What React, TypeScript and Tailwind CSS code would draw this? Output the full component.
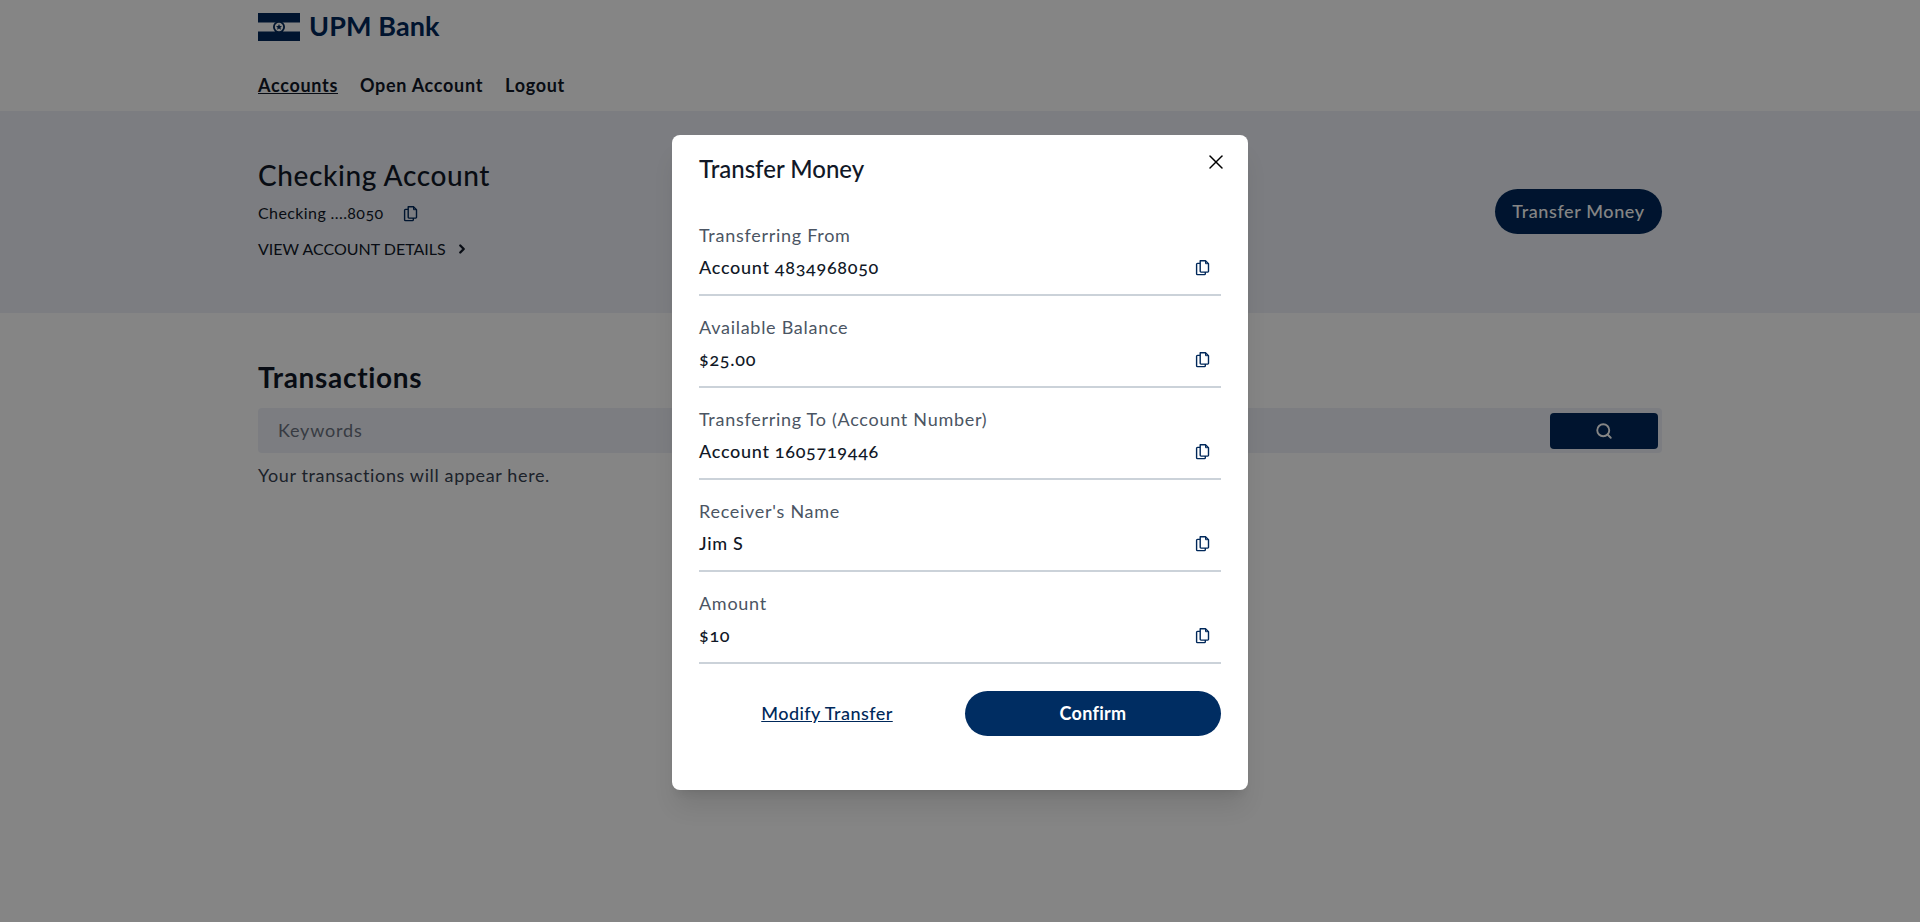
import React from "react";
import { X, ChevronRight, Search } from "lucide-react";

const F = "font-['Lato','Open_Sans',sans-serif]";

function Copy({ c = "#00285a" }: { c?: string }) {
  return (
    <svg width="15" height="17" viewBox="0 0 15 17" fill="none" stroke={c} strokeWidth="1.4" strokeLinejoin="round">
      <path d="M5.2 1.7h5.3l3 3v7.6a.8.8 0 0 1-.8.8H6a.8.8 0 0 1-.8-.8z" />
      <path d="M10.5 1.7v3h3" strokeWidth="1" />
      <path d="M5.2 4.4H2.5a.9.9 0 0 0-.9.9v9.4a.9.9 0 0 0 .9.9h6.9a.9.9 0 0 0 .9-.9v-1.6" />
    </svg>
  );
}

function Logo() {
  return (
    <svg width="42" height="28" viewBox="0 0 42 28">
      <rect width="42" height="28" fill="#fff" />
      <rect width="42" height="9.5" fill="#00285a" />
      <rect y="18.5" width="42" height="9.5" fill="#00285a" />
      <circle cx="21" cy="14" r="6" fill="#00285a" />
      <circle cx="21" cy="14" r="4.2" fill="#fff" />
      <polygon points="21,11 21.9,13 24,13.2 22.4,14.6 22.9,16.8 21,15.6 19.1,16.8 19.6,14.6 18,13.2 20.1,13" fill="#00285a" />
    </svg>
  );
}

function Field({ label, value }: { label: string; value: string }) {
  return (
    <div className="h-[92px] flex flex-col">
      <div className="text-[18px] leading-[24px] text-[#4b5563] mt-[19px] tracking-[0.72px]">{label}</div>
      <div className="flex items-center justify-between border-b-2 border-[#cbd2d9] h-[49px] pr-[11px] pb-[7px]">
        <span className="text-[18px] text-[#111827] font-medium tracking-[0.7px] oldstyle-nums">{value}</span>
        <Copy />
      </div>
    </div>
  );
}

export default function App() {
  return (
    <div className={`${F} relative h-[922px] overflow-hidden bg-white text-[#111827]`}>
      <header className="h-[111px] pl-[258px]">
        <div className="flex items-center gap-[9px] h-[53px]">
          <Logo />
          <span className="text-[27px] font-bold text-[#00285a] tracking-[0.1px]">UPM Bank</span>
        </div>
        <nav className="flex gap-[22px] mt-[19px] text-[18px] font-bold tracking-[0.7px]">
          <span className="underline">Accounts</span>
          <span>Open Account</span>
          <span>Logout</span>
        </nav>
      </header>
      <section className="h-[202px] bg-[#edf0f7] px-[258px] flex items-center justify-between">
        <div className="-mt-[6px]">
          <h1 className="text-[28px] leading-[36px] font-medium tracking-[0.6px]">Checking Account</h1>
          <div className="flex items-center gap-[20px] mt-[8px] text-[16px] tracking-[0.4px] oldstyle-nums">
            <span>Checking ....8050</span>
            <Copy />
          </div>
          <div className="flex items-center gap-[9px] mt-[12px] text-[16px]">
            <span>VIEW ACCOUNT DETAILS</span>
            <ChevronRight size={14} strokeWidth={4} />
          </div>
        </div>
        <button className="w-[167px] h-[45px] -mt-[1px] rounded-full bg-[#00285a] text-white text-[18px] font-medium tracking-[0.6px]">
          Transfer Money
        </button>
      </section>
      <main className="px-[258px] pt-[46px]">
        <h2 className="text-[28px] leading-[36px] font-bold tracking-[0.7px]">Transactions</h2>
        <div className="mt-[13px] h-[45px] bg-[#edf0f7] rounded flex items-center justify-between pl-[20px] pr-[4px]">
          <span className="text-[18px] text-[#6b7280] tracking-[0.8px]">Keywords</span>
          <button className="w-[108px] h-[36px] rounded bg-[#00285a] flex items-center justify-center">
            <Search size={18} color="#fff" strokeWidth={2.5} />
          </button>
        </div>
        <p className="mt-[9px] text-[18px] text-[#374151] tracking-[0.63px]">Your transactions will appear here.</p>
      </main>
      <div className="absolute inset-0 bg-black/[.48]" />
      <div className="absolute left-[672px] top-[135px] w-[576px] h-[655px] bg-white rounded-lg shadow-xl px-[27px]">
        <X size={24} strokeWidth={1.5} className="absolute right-[20px] top-[15px] text-black" />
        <h3 className="text-[24px] font-medium leading-[32px] mt-[18px] mb-[19px]">Transfer Money</h3>
        <Field label="Transferring From" value="Account 4834968050" />
        <Field label="Available Balance" value="$25.00" />
        <Field label="Transferring To (Account Number)" value="Account 1605719446" />
        <Field label="Receiver's Name" value="Jim S" />
        <Field label="Amount" value="$10" />
        <div className="flex items-center mt-[27px]">
          <span className="w-[256px] text-center underline text-[18px] font-medium text-[#00285a] tracking-[0.45px]">Modify Transfer</span>
          <button className="w-[256px] ml-auto h-[45px] rounded-full bg-[#002d62] text-white text-[18px] font-bold tracking-[0.3px]">Confirm</button>
        </div>
      </div>
    </div>
  );
}
